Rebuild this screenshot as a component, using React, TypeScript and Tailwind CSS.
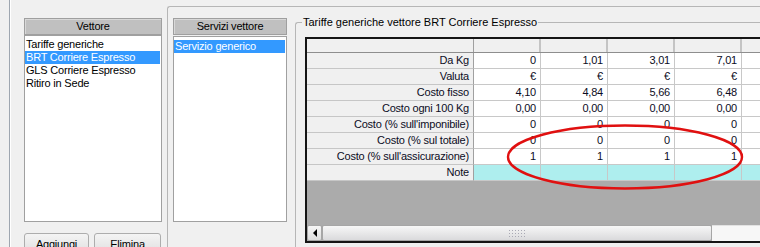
import React from "react";

const vettori = [
  "Tariffe generiche",
  "BRT Corriere Espresso",
  "GLS Corriere Espresso",
  "Ritiro in Sede",
];

const rows: { label: string; values: string[]; note?: boolean }[] = [
  { label: "Da Kg", values: ["0", "1,01", "3,01", "7,01", ""] },
  { label: "Valuta", values: ["€", "€", "€", "€", ""] },
  { label: "Costo fisso", values: ["4,10", "4,84", "5,66", "6,48", ""] },
  { label: "Costo ogni 100 Kg", values: ["0,00", "0,00", "0,00", "0,00", ""] },
  { label: "Costo (% sull'imponibile)", values: ["0", "0", "0", "0", ""] },
  { label: "Costo (% sul totale)", values: ["0", "0", "0", "0", ""] },
  { label: "Costo (% sull'assicurazione)", values: ["1", "1", "1", "1", ""] },
  { label: "Note", values: ["", "", "", "", ""], note: true },
];

function ListHeader({ children }: { children: React.ReactNode }) {
  return (
    <div className="flex h-[17px] shrink-0 items-center justify-center border border-[#9f9f9f] bg-[#c0c0c0] shadow-[inset_1px_1px_0_#d8d8d8]">
      {children}
    </div>
  );
}

function ListItem({ label, selected }: { label: string; selected?: boolean }) {
  return (
    <div
      className={`h-[13px] whitespace-nowrap pl-[1px] leading-[13px] ${
        selected ? "bg-[#3399ff] text-white" : ""
      }`}
    >
      {label}
    </div>
  );
}

function Button({ label, width }: { label: string; width: string }) {
  return (
    <div
      className={`${width} flex h-[23px] shrink-0 items-center justify-center rounded-[3px] border border-[#adadad] bg-gradient-to-b from-[#f4f4f4] to-[#dedede]`}
    >
      {label}
    </div>
  );
}

function Scrollbar() {
  return (
    <div className="flex h-[16px] shrink-0">
      <div className="flex w-[15px] shrink-0 items-center justify-center rounded-[2px] border border-[#a6a6a6] bg-gradient-to-b from-[#f6f6f6] to-[#dcdcdc]">
        <div className="h-0 w-0 border-y-[4px] border-r-[4px] border-y-transparent border-r-black" />
      </div>
      <div className="flex w-[390px] shrink-0 items-center justify-center rounded-[2px] border border-[#a6a6a6] bg-gradient-to-b from-[#f7f7f7] to-[#dadadc]">
        <div className="grid grid-cols-6 gap-x-[2px] gap-y-[2px]">
          {Array.from({ length: 18 }).map((_, i) => (
            <div key={i} className="h-px w-px bg-[#a9a9b4]" />
          ))}
        </div>
      </div>
      <div className="flex-1 border-t border-[#e2e2e2] bg-[#f7f7f7]" />
    </div>
  );
}

function Grid() {
  return (
    <div className="flex h-[206px] w-[520px] shrink-0 flex-col border-2 border-r-0 border-[#151515] bg-[#ababab] text-[#0c0c24]">
      {/* column headers */}
      <div className="flex h-[14px] shrink-0 border-b border-[#8e8e8e] bg-[#f0f0f0]">
        <div className="w-[167px] shrink-0 border-r border-[#a0a0a0]" />
        {[0, 1, 2, 3, 4].map((i) => (
          <div key={i} className="w-[67px] shrink-0 border-r-2 border-[#c4c4c4]" />
        ))}
      </div>
      {rows.map((r) => (
        <div key={r.label} className="flex h-[16px] shrink-0">
          <div className="w-[167px] shrink-0 whitespace-nowrap border-b border-r border-b-[#c6c6c6] border-r-[#a0a0a0] bg-[#f0f0f0] pr-[4px] text-right leading-[15px]">
            {r.label}
          </div>
          {r.values.map((v, i) => (
            <div
              key={i}
              className={`w-[67px] shrink-0 border-b border-r border-[#c8c8c8] pr-[4px] text-right leading-[15px] ${
                r.note ? "bg-[#aeeeee]" : "bg-white"
              }`}
            >
              {v}
            </div>
          ))}
        </div>
      ))}
      <div className="flex-1" />
      <Scrollbar />
    </div>
  );
}

export default function App() {
  return (
    <div className="relative flex h-[247px] w-[760px] overflow-hidden bg-[#f0f0f0] font-['Liberation_Sans',Arial,sans-serif] text-[11px] leading-[13px] tracking-[-0.2px] text-black">
      {/* splitter edge */}
      <div className="ml-[9px] w-px shrink-0 bg-[#9ea6b0]" />
      <div className="w-px shrink-0 bg-white" />

      {/* Vettore */}
      <div className="ml-[13px] mt-[18px] flex w-[138px] shrink-0 flex-col">
        <ListHeader>Vettore</ListHeader>
        <div className="h-[187px] shrink-0 border border-[#a0a0a0] bg-white pr-px pt-[2px]">
          {vettori.map((v) => (
            <ListItem key={v} label={v} selected={v === "BRT Corriere Espresso"} />
          ))}
        </div>
        <div className="mt-[11px] flex shrink-0 gap-[5px]">
          <Button label="Aggiungi" width="w-[65px]" />
          <Button label="Elimina" width="w-[67px]" />
        </div>
      </div>

      {/* Servizi + tariffe group */}
      <div className="ml-[5px] mt-[6px] flex flex-1 items-start rounded-tl-[3px] border-l border-t border-[#b6b6b6]">
        <div className="ml-[5px] mt-[11px] flex w-[114px] shrink-0 flex-col">
          <ListHeader>Servizi vettore</ListHeader>
          <div className="mt-px h-[186px] shrink-0 border border-[#a0a0a0] bg-white pr-px pt-[3px]">
            <ListItem label="Servizio generico" selected />
          </div>
        </div>

        <div className="ml-[8px] mt-[15px] flex h-[240px] flex-1 flex-col rounded-tl-[3px] border-l border-t border-[#b6b6b6]">
          <span className="-mt-[7px] ml-[6px] block w-fit whitespace-nowrap bg-[#f0f0f0] px-px leading-[13px] tracking-normal">
            Tariffe generiche vettore BRT Corriere Espresso
          </span>
          <div className="ml-[9px] mt-[8px]">
            <Grid />
          </div>
        </div>
      </div>

      {/* annotation */}
      <svg className="pointer-events-none absolute inset-0" width="760" height="247">
        <ellipse cx="625" cy="157" rx="117" ry="31.5" fill="none" stroke="#e01010" strokeWidth="2.4" />
      </svg>
    </div>
  );
}
